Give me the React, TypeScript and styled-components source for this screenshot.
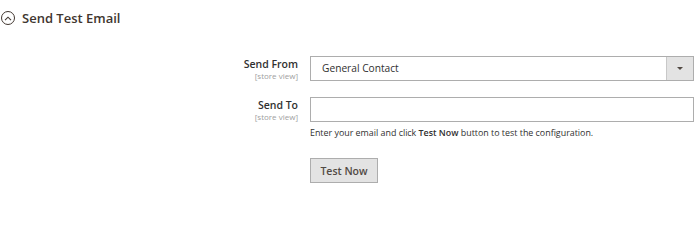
import React from "react";
import styled, { createGlobalStyle } from "styled-components";

const GlobalStyle = createGlobalStyle`
  html, body {
    margin: 0;
    padding: 0;
    background: #ffffff;
  }
  body {
    font-family: "Open Sans", "Liberation Sans", sans-serif;
    color: #303030;
  }
`;

const Page = styled.div`
  width: 700px;
  height: 212px;
  box-sizing: border-box;
  padding: 10px 6px 0 1px;
`;

const SectionHeader = styled.div`
  display: flex;
  align-items: center;
  gap: 7px;
  height: 16px;
`;

const ToggleIcon = styled.span`
  display: flex;
  align-items: center;
  justify-content: center;
  width: 12px;
  height: 12px;
  border: 1px solid #41362f;
  border-radius: 50%;
`;

const SectionTitle = styled.h3`
  margin: 0;
  font-size: 13px;
  font-weight: 600;
  line-height: 16px;
  color: #41362f;
`;

const Fieldset = styled.div`
  display: flex;
  flex-direction: column;
  margin-top: 30px;
`;

const Row = styled.div<{ $gap?: number }>`
  display: grid;
  grid-template-columns: 297px 1fr;
  column-gap: 12px;
  margin-bottom: ${(p) => p.$gap ?? 0}px;
`;

const LabelCell = styled.div`
  display: flex;
  flex-direction: column;
  align-items: flex-end;
  padding-top: 1px;
`;

const LabelText = styled.label`
  font-size: 10.5px;
  font-weight: 600;
  line-height: 14px;
  color: #303030;
`;

const Scope = styled.span`
  font-size: 8px;
  line-height: 10px;
  color: #a0a0a0;
`;

const Control = styled.div`
  display: flex;
  flex-direction: column;
`;

const SelectBox = styled.div`
  display: flex;
  height: 25px;
  box-sizing: border-box;
  border: 1px solid #adadad;
  background: #ffffff;
`;

const SelectValue = styled.span`
  flex: 1;
  padding-left: 11px;
  font-size: 10.2px;
  line-height: 23px;
  color: #303030;
`;

const SelectArrow = styled.span`
  display: flex;
  align-items: center;
  justify-content: center;
  width: 26px;
  background: #e3e3e3;
  border-left: 1px solid #c8c8c8;
`;

const Caret = styled.span`
  width: 0;
  height: 0;
  border-left: 3px solid transparent;
  border-right: 3px solid transparent;
  border-top: 3px solid #514943;
`;

const TextInput = styled.input`
  height: 25px;
  box-sizing: border-box;
  border: 1px solid #adadad;
  padding: 0 11px;
  font-family: inherit;
  font-size: 10px;
  outline: none;
`;

const Note = styled.p`
  margin: 4px 0 0;
  font-size: 8.9px;
  line-height: 13px;
  color: #303030;

  strong {
    font-weight: 600;
  }
`;

const Button = styled.button`
  align-self: flex-start;
  margin-top: 19px;
  width: 68px;
  height: 25px;
  box-sizing: border-box;
  border: 1px solid #adadad;
  background: #e3e3e3;
  font-family: inherit;
  font-size: 10.5px;
  font-weight: 600;
  color: #514943;
  padding: 0;
`;

export default function App() {
  return (
    <>
      <GlobalStyle />
      <Page>
        <SectionHeader>
          <ToggleIcon>
            <svg width="8" height="5" viewBox="0 0 8 5">
              <path d="M1 4.2 L4 1.2 L7 4.2" fill="none" stroke="#41362f" strokeWidth="1.1" />
            </svg>
          </ToggleIcon>
          <SectionTitle>Send Test Email</SectionTitle>
        </SectionHeader>
        <Fieldset>
          <Row $gap={16}>
            <LabelCell>
              <LabelText>Send From</LabelText>
              <Scope>[store view]</Scope>
            </LabelCell>
            <Control>
              <SelectBox>
                <SelectValue>General Contact</SelectValue>
                <SelectArrow>
                  <Caret />
                </SelectArrow>
              </SelectBox>
            </Control>
          </Row>
          <Row>
            <LabelCell>
              <LabelText>Send To</LabelText>
              <Scope>[store view]</Scope>
            </LabelCell>
            <Control>
              <TextInput type="text" />
              <Note>
                Enter your email and click <strong>Test Now</strong> button to test the configuration.
              </Note>
              <Button type="button">Test Now</Button>
            </Control>
          </Row>
        </Fieldset>
      </Page>
    </>
  );
}
